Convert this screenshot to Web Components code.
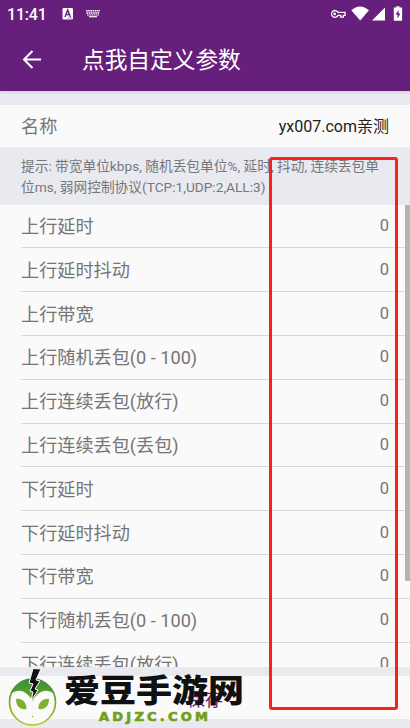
<!DOCTYPE html>
<html lang="zh-CN">
<head>
<meta charset="utf-8">
<title>点我自定义参数</title>
<style>
html,body{margin:0;height:100%;overflow:hidden}
body{font-family:Roboto,"Noto Sans CJK SC",sans-serif}
</style>
</head>
<body>
<settings-screen></settings-screen>
<script>
function define(name, html, setup) {
  const t = document.createElement('template');
  t.innerHTML = html;
  customElements.define(name, class extends HTMLElement {
    constructor() {
      super();
      this.attachShadow({mode: 'open'}).append(t.content.cloneNode(true));
    }
    connectedCallback() { if (setup) setup(this, this.shadowRoot); }
  });
}

define('status-bar', `
<style>
:host{display:flex;align-items:center;height:28px;color:#fff;padding-left:7px;font-size:16px;font-weight:500;box-sizing:border-box}
span{width:55px;letter-spacing:-.2px}
svg{display:block}
.right{margin-left:auto}
</style>
<span>11:41</span>
<svg width="42" height="28" viewBox="62 0 42 28"><rect x="62.500" y="8" width="10.500" height="11.500" rx="1.200" fill="#fff"/><path d="M65 17l2.700-7 2.700 7M66 14.600h3.500" fill="none" stroke="#661f7b" stroke-width="1.400"/><path d="M68 18h4" stroke="#661f7b" stroke-width=".8" stroke-dasharray="1 .6"/>
<g stroke="#fff" fill="none"><path d="M86 10.700h14M86.500 13h13" stroke-width="1.500" stroke-dasharray="1.600 .6"/><path d="M87 15h12" stroke-width="1.200" stroke-dasharray="1.700 .5"/><path d="M89 16.700h8" stroke-width="1.200"/></g></svg>
<svg class="right" width="85" height="28" viewBox="325 0 85 28">
<g fill="none" stroke="#fff" stroke-width="1.300"><path d="M338 12.400a3.400 3.400 0 1 0 0 3h2.700v1.700h2.700v-1.700h1.700v-3z"/></g><circle cx="334.700" cy="13.900" r="1.300" fill="#fff"/>
<path fill="#fff" d="M351.300 10.300Q360 2.700 369 10.300L360.200 20.600zM372 20.500L385 7.600V20.500zM396.300 6.200h3.200v1.300h2.600v13.200h-8.300V7.500h2.500z"/><path fill="#661f7b" d="M398.500 10l-3 4.600h2v4l3-5h-2z"/></svg>`);

define('app-header', `
<style>
:host{display:block;height:91px;background:#661f7b;color:#fff;box-shadow:0 1px 3px #0002;z-index:1;position:relative}
div{display:flex;align-items:center;height:63px}
svg{margin:0 40px 0 22px}
h1{font-size:22.700px;font-weight:400;margin:0;line-height:30px;padding-top:3px;white-space:nowrap}
</style>
<status-bar></status-bar>
<div><svg width="20" height="20" viewBox="0 0 20 20" fill="none" stroke="#fff" stroke-width="2"><path d="M19 9.500H2.400M10.500 1L2 9.500l8.500 8.500"/></svg><h1><slot></slot></h1></div>`);

define('param-row', `
<style>
:host{display:flex;flex:none;justify-content:space-between;align-items:center;height:43.800px;margin-left:21px;padding:2px 21px 0 0;box-sizing:border-box;border-bottom:1px solid #d9d9da;color:#757575;font-size:18.150px;line-height:26px;white-space:nowrap}
:host([name]){height:42px;border:0;margin:0;padding:2px 21px 0;background:#fafafa}
span{font-size:16.500px;padding-bottom:2px}
:host([name]) span{color:#212121;font-size:16px;padding-bottom:1px}
</style>
<div><slot></slot></div><span></span>`, (el, r) => { r.querySelector('span').textContent = el.getAttribute('value') || '0'; });

define('hint-text', `
<style>
:host{display:block;height:58px;box-sizing:border-box;padding:9px 0 0 21px;font-size:13.700px;line-height:20.500px;color:#77777b;white-space:nowrap}
</style><slot></slot>`);

define('param-list', `
<style>
:host{display:flex;height:462px;overflow:hidden;background:#fafafa}
.rows{display:flex;flex-direction:column;flex:1;margin:-.4px -5px 0 0}
i{width:5px;height:376px;background:#b4b4b5;position:relative}
</style><div class="rows"><slot></slot></div><i></i>`);

define('save-button', `
<style>
:host{display:flex;justify-content:center;align-items:center;height:43px;margin-top:9px;background:#fafafa;color:#661f7b;font-size:18px}
</style><slot></slot>`);

define('red-frame', `
<style>:host{display:block;position:absolute;left:269px;top:157px;width:129px;height:553px;box-sizing:border-box;border:3px solid #fc2118;border-radius:3px}</style>`);

define('site-mark', `
<style>
:host{display:block;position:absolute;left:0;top:664px;width:250px;height:64px}
svg{display:block}
.cn{font-family:"Noto Sans CJK SC",sans-serif;font-weight:900;font-size:37px;fill:#101010}
.en{font-family:"DejaVu Sans",sans-serif;font-weight:700;font-size:13px;fill:#71a019;stroke:#71a019;stroke-width:.7px}
</style>
<svg width="250" height="64" viewBox="0 664 250 64">
<defs><linearGradient id="g" gradientUnits="userSpaceOnUse" x1="0" y1="679" x2="0" y2="725"><stop stop-color="#348d36"/><stop offset="1" stop-color="#b4c822"/></linearGradient></defs>
<circle cx="32.500" cy="702" r="23" fill="#fafafa" stroke="url(#g)" stroke-width="1.700"/>
<path d="M11 694A23 23 0 0 1 54 694C46 687 37 692 32.500 701C28 692 19 687 11 694z" fill="url(#g)"/>
<path d="M16 699C22 698 27 703 26.500 709C20 710 16 706 16 699zM49 699C43 698 38 703 38.500 709C45 710 49 706 49 699z" fill="#7fb02e"/>
<path d="M33 668.500L41 669L36 680L40 681L35 689L38 690L31 701L33 692L30 691L33 684L29 683z" fill="#111" stroke="#fff" stroke-width="1"/>
<circle cx="32.500" cy="716.500" r=".7" fill="#88b52d"/>
<text class="cn" x="64" y="0" textLength="180" lengthAdjust="spacingAndGlyphs" transform="translate(0 702.300) scale(1 .87)">爱豆手游网</text>
<text class="en" x="99" y="721" textLength="109" lengthAdjust="spacing">ADJZC.COM</text>
</svg>`);

define('settings-screen', `
<style>
:host{display:block;position:relative;width:410px;height:728px;overflow:hidden;background:#e9eaf0}
param-row[name]{margin-top:14px}
</style>
<app-header>点我自定义参数</app-header>
<param-row name value="yx007.com亲测">名称</param-row>
<hint-text>提示: 带宽单位kbps, 随机丢包单位%, 延时, 抖动, 连续丢包单<br>位ms, 弱网控制协议(TCP:1,UDP:2,ALL:3)</hint-text>
<param-list>
<param-row>上行延时</param-row>
<param-row>上行延时抖动</param-row>
<param-row>上行带宽</param-row>
<param-row>上行随机丢包(0 - 100)</param-row>
<param-row>上行连续丢包(放行)</param-row>
<param-row>上行连续丢包(丢包)</param-row>
<param-row>下行延时</param-row>
<param-row>下行延时抖动</param-row>
<param-row>下行带宽</param-row>
<param-row>下行随机丢包(0 - 100)</param-row>
<param-row>下行连续丢包(放行)</param-row>
</param-list>
<save-button>保存</save-button>
<site-mark></site-mark>
<red-frame></red-frame>`);
</script>
</body>
</html>
